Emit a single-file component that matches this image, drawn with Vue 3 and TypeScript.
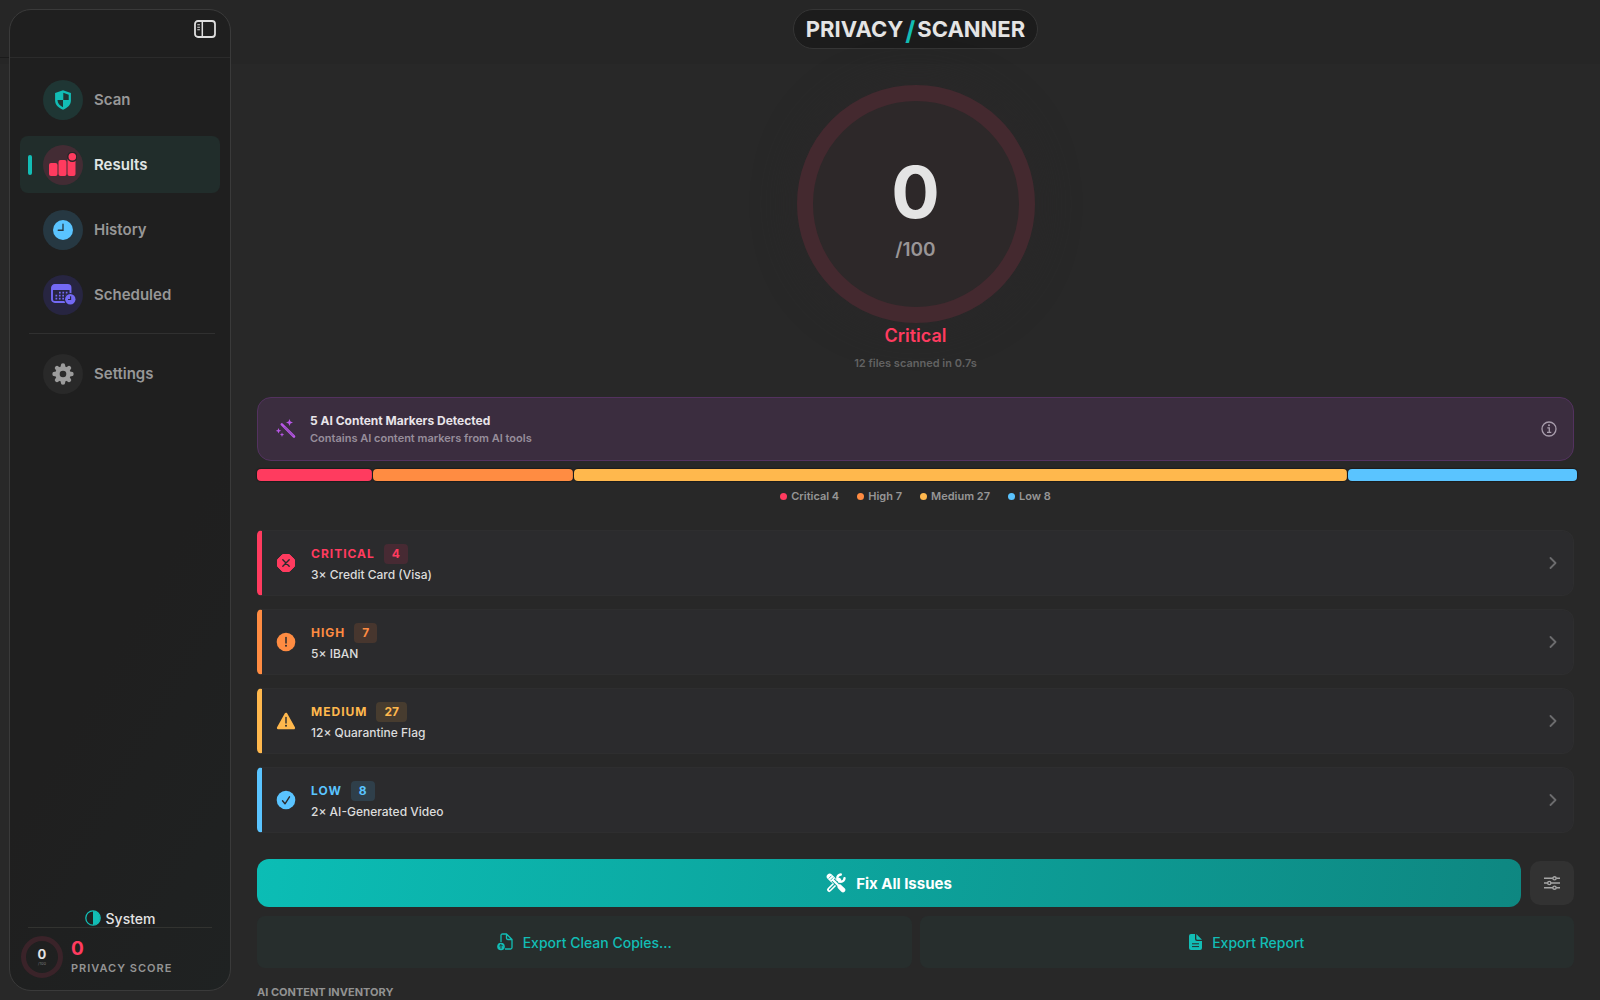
<script setup lang="ts">
interface NavItem {
  id: string
  label: string
}

interface Severity {
  id: string
  label: string
  count: number
  summary: string
  color: string
  tint: string
}

const navItems: NavItem[] = [
  { id: 'scan', label: 'Scan' },
  { id: 'results', label: 'Results' },
  { id: 'history', label: 'History' },
  { id: 'scheduled', label: 'Scheduled' },
]
const activeId = 'results'

const severities: Severity[] = [
  { id: 'critical', label: 'Critical', count: 4, summary: '3× Credit Card (Visa)', color: '#ff3b5f', tint: '#472a33' },
  { id: 'high', label: 'High', count: 7, summary: '5× IBAN', color: '#ff8c42', tint: '#47362e' },
  { id: 'medium', label: 'Medium', count: 27, summary: '12× Quarantine Flag', color: '#ffb84d', tint: '#473c2f' },
  { id: 'low', label: 'Low', count: 8, summary: '2× AI-Generated Video', color: '#5ac4ff', tint: '#2f3f4a' },
]
const total = severities.reduce((sum, s) => sum + s.count, 0)
const share = (s: Severity): string => `${(s.count / total) * 100}%`
</script>

<template>
  <div class="window">
    <aside class="sidebar">
      <header class="sidebar-head">
        <button class="icon-button" type="button" aria-label="Toggle sidebar">
          <svg width="22" height="18" viewBox="0 0 22 18" fill="none" stroke="#dedede">
            <rect x="1" y="1" width="20" height="16" rx="3" stroke-width="1.8" />
            <path d="M8.3 1v16" stroke-width="1.5" />
            <path d="M3.3 4.8h2.6M3.3 7.3h2.6M3.3 9.8h2.6" stroke-width="1.1" />
          </svg>
        </button>
      </header>

      <nav class="nav">
        <a
          v-for="item in navItems"
          :key="item.id"
          href="#"
          class="nav-item"
          :class="{ active: item.id === activeId }"
        >
          <span class="marker"></span>
          <span class="nav-icon" :class="item.id">
            <svg v-if="item.id === 'scan'" width="18" height="20" viewBox="0 0 18 21">
              <path d="M9 .3 17.300 3.200V11c0 4.500-3.300 7.600-8.300 9.700C4 18.600.7 15.500.7 11V3.200Z" fill="#12bdb5" stroke-linejoin="round" />
              <path d="M9.300 3 15 5V10.500H9.300ZM3.200 10.500H9V18C5.400 16.200 3.300 14 3.200 10.500Z" fill="#1f3634" />
            </svg>
            <svg v-else-if="item.id === 'results'" width="28" height="26" viewBox="0 0 28 26" fill="#ff3b5f">
              <rect x="0" y="11" width="8.500" height="13" rx="2" />
              <rect x="9.500" y="8" width="8" height="16" rx="2" />
              <rect x="18.500" y="6" width="8" height="18" rx="2" />
              <circle cx="23.300" cy="4.800" r="5.200" fill="#2a2528" />
              <circle cx="23.300" cy="4.800" r="3.800" />
            </svg>
            <svg v-else-if="item.id === 'history'" width="20" height="20" viewBox="0 0 21 21">
              <circle cx="10.500" cy="10.500" r="10.500" fill="#5ac4ff" />
              <path d="M10.500 4.500v6.300H5.500" fill="none" stroke="#263842" stroke-width="1.400" stroke-linecap="round" />
            </svg>
            <svg v-else width="25" height="21" viewBox="0 0 25 21">
              <rect x="1" y="1" width="18.500" height="17" rx="2.800" fill="none" stroke="#7369f5" stroke-width="1.900" />
              <path d="M1 3.500Q1 1 3.500 1h13.500q2.500 0 2.500 2.500V6H1Z" fill="#7369f5" />
              <path d="M8 8.700h8.500M4.500 11.700h12M4.500 14.700h9" stroke="#7369f5" stroke-width="1.700" stroke-dasharray="1.700 1.700" />
              <circle cx="19.300" cy="15.300" r="6.200" fill="#272541" />
              <circle cx="19.300" cy="15.300" r="5.200" fill="#7369f5" />
              <path d="M19.600 12.300v3.200h-2.600" fill="none" stroke="#272541" stroke-width="1.100" />
            </svg>
          </span>
          <span>{{ item.label }}</span>
        </a>
        <hr class="nav-rule" />
        <a href="#" class="nav-item">
          <span class="marker"></span>
          <span class="nav-icon settings">
            <svg width="22" height="22" viewBox="-11 -11 22 22">
              <g stroke="#9c9c9c" stroke-width="4.400" stroke-linecap="round">
                <path d="M0-8.500V8.500M-8.500 0H8.500M-6-6 6 6M-6 6 6-6" />
              </g>
              <circle r="7.800" fill="#9c9c9c" />
              <circle r="3.300" fill="#292929" />
            </svg>
          </span>
          <span>Settings</span>
        </a>
      </nav>

      <footer class="sidebar-foot">
        <button class="theme" type="button">
          <svg width="16" height="16" viewBox="0 0 16 16">
            <circle cx="8" cy="8" r="7.200" fill="none" stroke="#12bdb5" stroke-width="1.300" />
            <path d="M8 1a7 7 0 0 1 0 14Z" fill="#12bdb5" />
          </svg>
          <span>System</span>
        </button>
        <div class="score">
          <div class="mini-ring">
            <span class="mini-value">0</span>
            <span class="mini-max">/100</span>
          </div>
          <div class="score-text">
            <span class="score-value">0</span>
            <span class="score-label">PRIVACY SCORE</span>
          </div>
        </div>
      </footer>
    </aside>

    <main class="main">
      <h1 class="title"><span>PRIVACY</span><span class="slash">/</span><span>SCANNER</span></h1>

      <section class="gauge">
        <div class="ring">
          <span class="ring-value">0</span>
          <span class="ring-max">/100</span>
        </div>
        <p class="verdict">Critical</p>
        <p class="caption">12 files scanned in 0.7s</p>
      </section>

      <section class="banner">
        <svg width="20" height="20" viewBox="0 0 20 20" fill="#b957e8">
          <path d="M5.800 5.300 18 17.500" stroke="#b957e8" stroke-width="2.600" stroke-linecap="round" />
          <path d="m8.300 7.800 9 9" stroke="#6d3f86" stroke-width=".7" />
          <path d="m13.500 0 1 2.500 2.500 1-2.500 1-1 2.500-1-2.500-2.500-1 2.500-1Z" />
          <path d="m2.500 9 .8 2 2 .8-2 .8-.8 2-.8-2-2-.8 2-.8Z" />
          <path d="m6 13.500.6 1.600 1.600.6-1.600.6L6 18l-.6-1.700-1.600-.6 1.600-.6Z" />
        </svg>
        <div class="banner-text">
          <strong>5 AI Content Markers Detected</strong>
          <span>Contains AI content markers from AI tools</span>
        </div>
        <button class="icon-button" type="button" aria-label="About AI content markers">
          <svg width="16" height="16" viewBox="0 0 16 16" fill="none" stroke="#a79cab">
            <circle cx="8" cy="8" r="7" stroke-width="1.300" />
            <path d="M6.300 6.800h2v4.500M6 11.400h4.300" stroke-width="1.300" />
            <circle cx="8" cy="4.300" r="1" fill="#a79cab" stroke="none" />
          </svg>
        </button>
      </section>

      <div class="bar">
        <span
          v-for="s in severities"
          :key="s.id"
          class="segment"
          :style="{ width: share(s), background: s.color }"
        ></span>
      </div>
      <ul class="legend">
        <li v-for="s in severities" :key="s.id">
          <i class="dot" :style="{ background: s.color }"></i>{{ s.label }} {{ s.count }}
        </li>
      </ul>

      <section class="cards">
        <button
          v-for="s in severities"
          :key="s.id"
          type="button"
          class="card"
          :style="{ '--tone': s.color, '--tint': s.tint }"
        >
          <svg class="card-icon" width="20" height="20" viewBox="0 0 20 20">
            <template v-if="s.id === 'critical'">
              <path d="M6.600 1.500h6.800L18.500 6.600v6.800L13.400 18.500H6.600L1.500 13.400V6.600Z" :fill="s.color" :stroke="s.color" stroke-linejoin="round" />
              <path d="m6.800 6.800 6.400 6.400m0-6.400-6.400 6.400" stroke="#2b2b2d" stroke-width="1.400" stroke-linecap="round" />
            </template>
            <template v-else-if="s.id === 'high'">
              <circle cx="10" cy="10" r="9.300" :fill="s.color" />
              <path d="M10 5.500v5.500" stroke="#2b2b2d" stroke-width="1.500" stroke-linecap="round" />
              <circle cx="10" cy="13.800" r="1" fill="#2b2b2d" />
            </template>
            <template v-else-if="s.id === 'medium'">
              <path d="M10 3 17.800 17H2.200Z" :fill="s.color" :stroke="s.color" stroke-width="2.600" stroke-linejoin="round" />
              <path d="M10 6.500v5.500" stroke="#2b2b2d" stroke-width="1.400" stroke-linecap="round" />
              <circle cx="10" cy="14.800" r="1" fill="#2b2b2d" />
            </template>
            <template v-else>
              <circle cx="10" cy="10" r="9.300" :fill="s.color" />
              <path d="m6.500 10.800 2.500 3 4.500-7" fill="none" stroke="#2b2b2d" stroke-width="1.400" stroke-linecap="round" stroke-linejoin="round" />
            </template>
          </svg>
          <span class="card-text">
            <span class="card-head">
              <span class="card-label">{{ s.label }}</span>
              <span class="badge">{{ s.count }}</span>
            </span>
            <span class="card-summary">{{ s.summary }}</span>
          </span>
          <svg width="8" height="12" viewBox="0 0 8 12" fill="none" stroke="#6c6c6e" stroke-width="1.800" stroke-linecap="round" stroke-linejoin="round">
            <path d="m1.500 1 5 5-5 5" />
          </svg>
        </button>
      </section>

      <div class="fix-row">
        <button class="fix" type="button">
          <svg width="20" height="20" viewBox="0 0 20 20" fill="none" stroke="#fff" stroke-linecap="round">
            <path d="M3.200 16.800 13 7" stroke-width="4.400" />
            <path d="M3.500 16.500 12 8" stroke="#10a59e" stroke-width="1.200" />
            <path d="M18.500 5.200a3.600 3.600 0 1 1-3.700-3.700" stroke-width="2.400" />
            <path d="m3.700 3.700 3 3" stroke-width="6" />
            <path d="m7 7 6 6" stroke="#10a59e" stroke-width="4" stroke-linecap="butt" />
            <path d="m6.500 6.500 7 7" stroke-width="2.200" />
            <path d="m13.800 13.800 3.200 3.200" stroke-width="4.600" />
            <path d="m3 5.200 2.200-2.200M4.700 7 7 4.700" stroke="#10a59e" stroke-width=".8" />
          </svg>
          <span>Fix All Issues</span>
        </button>
        <button class="options" type="button" aria-label="Fix options">
          <svg width="16" height="14" viewBox="0 0 16 14" fill="#323232" stroke="#a5a5a5" stroke-width="1.400">
            <path d="M0 2.300h16M0 7h16M0 11.700h16" />
            <circle cx="10.500" cy="2.300" r="1.600" />
            <circle cx="5.300" cy="7" r="1.600" />
            <circle cx="10.500" cy="11.700" r="1.600" />
          </svg>
        </button>
      </div>

      <div class="export-row">
        <button class="export" type="button">
          <svg width="16" height="18" viewBox="0 0 16 18" fill="none" stroke="#12bdb5" stroke-width="1.300" stroke-linejoin="round">
            <path d="M4 9V2.500Q4 1 5.500 1H9.500L15 6.500V14.500Q15 16 13.500 16H8M9.500 1V5Q9.500 6.500 11 6.500H15" />
            <circle cx="4" cy="13.500" r="3.800" fill="#12bdb5" stroke="none" />
            <path d="M4 15.700v-4M2.300 13.200 4 11.500l1.700 1.700" stroke="#272e2d" stroke-width="1" />
          </svg>
          <span>Export Clean Copies...</span>
        </button>
        <button class="export" type="button">
          <svg width="13" height="16" viewBox="0 0 13 16">
            <path d="M2 0H6V5Q6 7 8 7H13V14Q13 16 11 16H2Q0 16 0 14V2Q0 0 2 0ZM7.300 0 13 5.800H8.300Q7.300 5.800 7.300 4.800Z" fill="#12bdb5" />
            <path d="M3 9.800h7M3 12.600h7" stroke="#272e2d" stroke-width="1" />
          </svg>
          <span>Export Report</span>
        </button>
      </div>

      <h2 class="inventory">AI CONTENT INVENTORY</h2>
    </main>
  </div>
</template>

<style>
body {
  margin: 0;
  background: #282828;
}
</style>

<style scoped>
* {
  box-sizing: border-box;
}

.window {
  display: flex;
  height: 100vh;
  overflow: hidden;
  background:
    linear-gradient(#1b1b1b, #1b1b1b) 0 57px / 9px 1px no-repeat,
    linear-gradient(#262626 64px, #282828 64px);
  color: #e4e4e4;
  font-family: Inter, "Liberation Sans", sans-serif;
}

button {
  margin: 0;
  padding: 0;
  border: 0;
  background: none;
  color: inherit;
  font: inherit;
  cursor: pointer;
}

.icon-button {
  display: flex;
}

/* Sidebar */
.sidebar {
  display: flex;
  flex-direction: column;
  flex: none;
  width: 222px;
  margin: 9px;
  border: 1px solid #3a3a3a;
  border-radius: 22px;
  background: linear-gradient(120deg, #1f1f1f 60%, #1f2222);
  overflow: hidden;
}

.sidebar-head {
  display: flex;
  align-items: center;
  justify-content: flex-end;
  height: 48px;
  padding: 0 14px 10px;
  border-bottom: 1px solid #2b2b2b;
}

.nav {
  display: flex;
  flex-direction: column;
  gap: 8px;
  padding: 13px 10px;
}

.nav-item {
  display: flex;
  align-items: center;
  height: 57px;
  padding-left: 8px;
  border-radius: 8px;
  color: #979797;
  font-size: 15px;
  font-weight: 600;
  text-decoration: none;
}

.nav-item.active {
  background: #212d2b;
  color: #e1e6e5;
}

.marker {
  width: 4px;
  height: 20px;
  margin-right: 11px;
  border-radius: 2px;
}

.active .marker {
  background: #12bdb5;
}

.nav-icon {
  display: flex;
  align-items: center;
  justify-content: center;
  width: 40px;
  height: 40px;
  margin-right: 11px;
  border-radius: 50%;
}

.nav-icon.scan { background: #1f3634; }
.nav-icon.results { background: #432c34; }
.nav-icon.history { background: #263842; }
.nav-icon.scheduled { background: #272541; }
.nav-icon.settings { background: #292929; }

.nav-rule {
  width: 186px;
  height: 1px;
  margin: 2px 0 3px 9px;
  border: 0;
  background: #303030;
}

.sidebar-foot {
  display: flex;
  flex-direction: column;
  margin-top: auto;
  padding: 0 11px 12px;
}

.theme {
  display: flex;
  align-items: center;
  justify-content: center;
  gap: 5px;
  height: 19px;
  margin: 0 7px;
  border-bottom: 1px solid #323330;
  font-size: 14px;
  font-weight: 500;
}

.score {
  display: flex;
  align-items: center;
  gap: 8px;
  padding-top: 8px;
}

.mini-ring {
  display: flex;
  flex-direction: column;
  align-items: center;
  justify-content: center;
  width: 42px;
  height: 42px;
  border: 5px solid #3a2329;
  border-radius: 50%;
}

.mini-value {
  font-size: 13px;
  font-weight: 700;
  line-height: 14px;
}

.mini-max {
  color: #777;
  font-size: 4px;
  line-height: 6px;
}

.score-text {
  display: flex;
  flex-direction: column;
}

.score-value {
  color: #ff3b5f;
  font-size: 19px;
  font-weight: 700;
  line-height: 22px;
}

.score-label {
  color: #949494;
  font-size: 11px;
  font-weight: 600;
  letter-spacing: 1px;
  line-height: 16px;
}

/* Main column */
.main {
  display: flex;
  flex: 1;
  flex-direction: column;
  min-width: 0;
  padding: 9px 26px 0 17px;
}

.title {
  display: flex;
  align-items: center;
  align-self: center;
  gap: 2px;
  height: 40px;
  margin: 0;
  padding: 0 12px;
  border: 1px solid #353535;
  border-radius: 20px;
  background: #1c1c1c;
  font-size: 22px;
  font-weight: 700;
}

.slash {
  padding-top: 3px;
  color: #12bdb5;
  font-size: 26px;
}

.gauge {
  display: flex;
  flex-direction: column;
  align-items: center;
  padding-top: 36px;
}

.ring {
  display: flex;
  flex-direction: column;
  align-items: center;
  width: 238px;
  height: 238px;
  padding-top: 51px;
  border: 16px solid #44292f;
  border-radius: 50%;
  background: #2d2829;
  box-shadow: 0 0 40px #2a2829;
}

.ring-value {
  font-size: 72px;
  font-weight: 700;
  line-height: 80px;
}

.ring-max {
  margin-top: 6px;
  color: #9a9697;
  font-size: 19px;
  font-weight: 600;
  line-height: 24px;
}

.verdict {
  margin: 0;
  color: #ff3b5f;
  font-size: 18px;
  font-weight: 600;
  line-height: 26px;
}

.caption {
  margin: 6px 0 0;
  color: #626262;
  font-size: 11px;
  font-weight: 600;
  line-height: 16px;
}

.banner {
  display: flex;
  align-items: center;
  gap: 14px;
  height: 64px;
  margin-top: 26px;
  padding: 0 16px 0 18px;
  border: 1px solid #53325f;
  border-radius: 14px;
  background: #3b2d3f;
}

.banner-text {
  display: flex;
  flex: 1;
  flex-direction: column;
  color: #978d9b;
  font-size: 11px;
  font-weight: 600;
  line-height: 16px;
}

.banner-text strong {
  color: #e8e4e9;
  font-size: 12px;
  font-weight: 700;
  line-height: 18px;
}

.bar {
  display: flex;
  gap: 1px;
  margin-top: 8px;
}

.segment {
  flex: none;
  height: 12px;
  border-radius: 4px;
  box-shadow: 0 0 1px 1px #1c1c1c;
}

.legend {
  display: flex;
  justify-content: center;
  gap: 18px;
  margin: 7px 0 0;
  padding: 0;
  color: #969696;
  font-size: 11px;
  font-weight: 600;
  line-height: 16px;
  list-style: none;
}

.legend li {
  display: flex;
  align-items: center;
}

.dot {
  width: 7px;
  height: 7px;
  margin-right: 4px;
  border-radius: 50%;
}

.cards {
  display: flex;
  flex-direction: column;
  gap: 13px;
  margin-top: 26px;
}

.card {
  display: flex;
  align-items: center;
  height: 66px;
  padding: 0 16px 0 14px;
  border: 1px solid #2e2e2f;
  border-left: 5px solid var(--tone);
  border-radius: 5px 12px 12px 5px;
  background: #2b2b2d;
  text-align: left;
}

.card-icon {
  margin-right: 15px;
}

.card-text {
  display: flex;
  flex: 1;
  flex-direction: column;
  padding-top: 3px;
}

.card-head {
  display: flex;
  align-items: center;
  gap: 9px;
}

.card-label {
  color: var(--tone);
  font-size: 12px;
  font-weight: 700;
  letter-spacing: 1px;
  text-transform: uppercase;
}

.badge {
  padding: 0 8px;
  border-radius: 4px;
  background: var(--tint);
  color: var(--tone);
  font-size: 12px;
  font-weight: 700;
  line-height: 20px;
}

.card-summary {
  color: #dcdcdc;
  font-size: 12px;
  font-weight: 500;
  line-height: 22px;
}

.fix-row {
  display: flex;
  align-items: center;
  gap: 9px;
  margin-top: 26px;
}

.fix {
  display: flex;
  flex: 1;
  align-items: center;
  justify-content: center;
  gap: 10px;
  height: 48px;
  border-radius: 12px;
  background: linear-gradient(100deg, #0bbdb5, #0e8781);
  color: #fff;
  font-size: 15px;
  font-weight: 700;
}

.options {
  display: flex;
  align-items: center;
  justify-content: center;
  width: 44px;
  height: 44px;
  border-radius: 10px;
  background: #323232;
}

.export-row {
  display: flex;
  gap: 8px;
  margin-top: 9px;
}

.export {
  display: flex;
  flex: 1;
  align-items: center;
  justify-content: center;
  gap: 10px;
  height: 52px;
  border-radius: 8px;
  background: #272e2d;
  color: #12bdb5;
  font-size: 14px;
  font-weight: 500;
}

.inventory {
  margin: 16px 0 0;
  color: #929292;
  font-size: 11px;
  font-weight: 700;
  line-height: 16px;
}
</style>
